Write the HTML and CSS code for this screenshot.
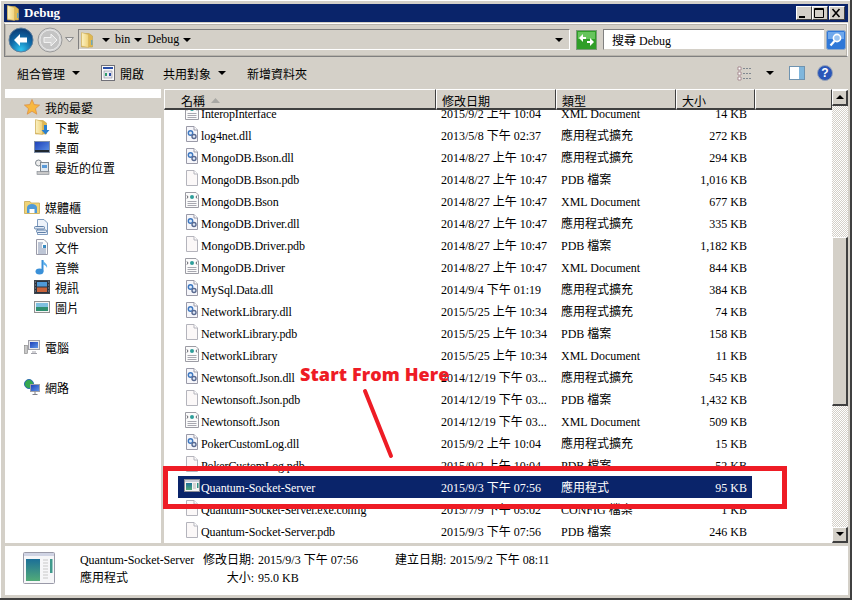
FILE: index.html
```html
<html>
<head>
<meta charset="utf-8" />
<title>Debug</title>
<link rel="stylesheet" href="styles.css">
</head>
<body>
<svg class="defs" width="0" height="0">
	<defs>
		<linearGradient id="folderFill" x1="0" y1="0" x2="1" y2="0">
			<stop offset="0" stop-color="#fbf2c4"/>
			<stop offset="1" stop-color="#f0d27a"/>
		</linearGradient>
		<linearGradient id="screenFill" x1="0" y1="0" x2="1" y2="1">
			<stop offset="0" stop-color="#1c3fb8"/>
			<stop offset="1" stop-color="#5f96e8"/>
		</linearGradient>
		<linearGradient id="appFill" x1="0" y1="0" x2="0" y2="1">
			<stop offset="0" stop-color="#1c6f98"/>
			<stop offset="1" stop-color="#52ab78"/>
		</linearGradient>
		<radialGradient id="backFill" cx="0.5" cy="0.9" r="0.85">
			<stop offset="0" stop-color="#2fc4f0"/>
			<stop offset="0.55" stop-color="#0f6aa8"/>
			<stop offset="1" stop-color="#0b3f78"/>
		</radialGradient>
		<symbol id="i-blank" viewBox="0 0 16 16">
			<path d="M2.5 .5H10L13.5 4V15.5H2.5Z" fill="#fbf8f8" stroke="#b4b4bc"/>
			<path d="M10 .5V4H13.5" fill="#fff" stroke="#b4b4bc"/>
		</symbol>
		<symbol id="i-dll" viewBox="0 0 16 16">
			<path d="M2.5 .5H10L13.5 4V15.5H2.5Z" fill="#f6f6fa" stroke="#9a9aa8"/>
			<path d="M10 .5V4H13.5" fill="#fff" stroke="#9a9aa8"/>
			<circle cx="6.5" cy="7" r="2.2" fill="#dfeaf8" stroke="#3f78c0" stroke-width="1.4"/>
			<circle cx="10" cy="10.5" r="2" fill="#dfeaf8" stroke="#5a6a90" stroke-width="1.4"/>
		</symbol>
		<symbol id="i-xml" viewBox="0 0 16 16">
			<path d="M1.5 .5H12L14.5 3V15.5H1.5Z" fill="#fbfbfb" stroke="#9c9ca4"/>
			<path d="M3 3.5L4 5L3 6.5M13 3.5L12 5L13 6.5" fill="none" stroke="#606068"/>
			<circle cx="8" cy="5" r="2" fill="#2e9e9a"/>
			<path d="M3.5 9.5H12.5M3.5 11.5H12.5M3.5 13.5H12.5" stroke="#a8a8b0"/>
		</symbol>
		<symbol id="i-app" viewBox="0 0 16 16">
			<rect x=".5" y="1.5" width="15" height="12" fill="#f4f4f4" stroke="#8c8c94"/>
			<rect x="1" y="2" width="14" height="2" fill="#c8ccd8"/>
			<rect x="2" y="5" width="6" height="7" fill="url(#appFill)"/>
			<path d="M9 6H12M9 8H12M9 10H12" stroke="#b0b0b0"/>
			<rect x="13" y="5" width="1.5" height="5" fill="#2f8f80"/>
		</symbol>
		<symbol id="i-folder" viewBox="0 0 12 16">
			<path d="M.5 1.500H8L11.500 4V15H.5Z" fill="#e0b850" stroke="#c4a24a" stroke-width=".6"/>
			<path d="M10 8H11.500V13H10Z" fill="#6fa8b8"/>
			<path d="M.5 .5L7.500 2.500V15.500L.5 14Z" fill="url(#folderFill)" stroke="#d0b060" stroke-width=".6"/>
		</symbol>
	</defs>
</svg>

<div class="window">
	<div class="titlebar">
		<svg class="title-icon" width="12" height="16"><use href="#i-folder"/></svg>
		<span class="title-text">Debug</span>
		<div class="win-btns">
			<span class="win-btn"><svg width="15" height="14"><rect x="3" y="10" width="6" height="2" fill="#000"/></svg></span>
			<span class="win-btn"><svg width="15" height="14"><path d="M2.5 2.5H11.5V11.5H2.5Z M2.5 3.5H11.5" fill="none" stroke="#000"/></svg></span>
			<span class="win-btn win-close"><svg width="15" height="14"><path d="M3.5 3L10.5 11M10.5 3L3.5 11" stroke="#000" stroke-width="1.6"/></svg></span>
		</div>
	</div>

	<div class="navbar">
		<div class="nav-pill">
			<svg width="26" height="26"><circle cx="13" cy="13" r="12" fill="url(#backFill)" stroke="#5d7e9c"/><path d="M6 13L12 7V10.5H19V15.5H12V19Z" fill="#fff"/></svg>
			<svg class="nav-fwd" width="26" height="26"><circle cx="13" cy="13" r="12" fill="#d6d6d6" stroke="#9a9a9a"/><circle cx="13" cy="13" r="10" fill="#c4c4c4" stroke="#e6e6e6"/><path d="M20 13L14 7V10.5H7V15.5H14V19Z" fill="#d4d4d4" stroke="#f2f2f2"/></svg>
			<svg class="nav-drop" width="9" height="6"><path d="M.5 .5H8.5L4.5 5Z" fill="#eee" stroke="#8c8c8c"/></svg>
		</div>
		<div class="address">
			<svg class="addr-icon" width="12" height="16"><use href="#i-folder"/></svg>
			<span class="caret addr-first"></span>
			<span class="crumb">bin</span>
			<span class="caret"></span>
			<span class="crumb">Debug</span>
			<span class="caret"></span>
			<span class="caret addr-end"></span>
		</div>
		<svg class="refresh" width="21" height="20">
			<rect x=".5" y=".5" width="20" height="19" fill="#2f9e28" stroke="#7a9a78"/>
			<rect x="2" y="2" width="17" height="7" fill="#66c45c"/>
			<path d="M3 8L7 4V7H10V9H7V12ZM18 12L14 16V13H11V11H14V8Z" fill="#fff"/>
		</svg>
		<div class="search">搜尋 Debug</div>
		<svg class="search-btn" width="20" height="20">
			<rect x=".5" y=".5" width="19" height="19" rx="2" fill="#2f78d8" stroke="#8fa8c8"/>
			<rect x="2" y="2" width="16" height="7" fill="#6fa8ec"/>
			<circle cx="11" cy="8" r="3.6" fill="#9cc4f0" stroke="#fff" stroke-width="1.6"/>
			<path d="M8.5 11L4.5 15.5" stroke="#fff" stroke-width="2.2"/>
		</svg>
	</div>

	<div class="toolbar">
		<span class="tool">組合管理</span>
		<span class="caret tool-caret"></span>
		<svg class="tool-open" width="16" height="16">
			<rect x="1.5" y=".5" width="13" height="15" fill="#fafafa" stroke="#707078"/>
			<rect x="3" y="2" width="10" height="2" fill="#2a4fa8"/>
			<rect x="4" y="6" width="8" height="7" fill="#e8e8f0" stroke="#8a8a9a" stroke-width=".6"/>
			<rect x="5" y="8" width="2" height="3" fill="#2f9e6a"/>
			<rect x="9" y="8" width="2" height="3" fill="#2a4fa8"/>
		</svg>
		<span class="tool tool-gap4">開啟</span>
		<span class="tool tool-share">共用對象</span>
		<span class="caret tool-caret"></span>
		<span class="tool tool-new">新增資料夾</span>
		<div class="tool-right">
			<svg width="16" height="16"><path d="M1 2H4V5H1ZM1 7H4V10H1ZM1 12H4V15H1Z" fill="#fff" stroke="#9a7a80" stroke-width=".8"/><path d="M6 3.5H15M6 8.5H15M6 13.5H15" stroke="#808890" stroke-dasharray="2 1"/></svg>
			<span class="caret"></span>
			<svg width="16" height="16"><rect x=".5" y="1.5" width="15" height="13" fill="#fff" stroke="#6f93b0"/><rect x="10" y="2" width="5" height="12" fill="#7fb6dc"/></svg>
			<svg width="16" height="16"><circle cx="8" cy="8" r="7.5" fill="#2a56b8" stroke="#98a4b8"/><text class="help-mark" x="8" y="12" text-anchor="middle">?</text></svg>
		</div>
	</div>

	<div class="main">
		<div class="sidebar">
			<div class="side-section">
				<div class="side-group">
					<svg width="16" height="16"><path d="M8 .5L10.2 5.6L15.6 6.1L11.5 9.7L12.8 15.2L8 12.3L3.2 15.2L4.5 9.7L.4 6.1L5.8 5.6Z" fill="#f8b840" stroke="#d88a40" stroke-width=".7"/></svg>
					<span>我的最愛</span>
				</div>
				<div class="side-item">
					<svg width="16" height="16"><use href="#i-folder" width="12" height="16" x="1"/><path d="M10 6H13V11H15.5L11.5 15.5L7.5 11H10Z" fill="#2a80d0"/></svg>
					<span>下載</span>
				</div>
				<div class="side-item">
					<svg width="16" height="16"><rect x=".5" y="2.5" width="15" height="11" fill="url(#screenFill)" stroke="#8090a8"/><rect x="1" y="11" width="14" height="2" fill="#202830"/></svg>
					<span>桌面</span>
				</div>
				<div class="side-item">
					<svg width="16" height="16"><circle cx="4.5" cy="4" r="3" fill="#eee" stroke="#808890"/><rect x="6.5" y="3.5" width="8" height="9" fill="#dfe8f0" stroke="#808890"/><rect x="8" y="6" width="5" height="3" fill="#5a9ad8"/><rect x="3" y="12.5" width="12" height="3" fill="#c8c8c8" stroke="#808890" stroke-width=".6"/></svg>
					<span>最近的位置</span>
				</div>
			</div>

			<div class="side-section">
				<div class="side-group">
					<svg width="16" height="16"><path d="M.5 2.5H6L7 4H15.5V14.5H.5Z" fill="#f0d478" stroke="#c8a850" stroke-width=".8"/><path d="M3 8.5A5 3.5 0 0 1 13 8.5V14H3Z" fill="#4f9ad8"/><rect x="5.5" y="10" width="5" height="4" fill="#fff"/></svg>
					<span>媒體櫃</span>
				</div>
				<div class="side-item">
					<svg width="16" height="16"><path d="M3.5 .5H10L13.5 4V15.5H3.5Z" fill="#eef3fa" stroke="#7f9cc0"/><rect x=".5" y="7.5" width="10" height="2.5" rx="1" fill="#dfe8f4" stroke="#6080a8"/><rect x="2.5" y="11" width="10" height="2.5" rx="1" fill="#dfe8f4" stroke="#6080a8"/></svg>
					<span class="latin">Subversion</span>
				</div>
				<div class="side-item">
					<svg width="16" height="16"><path d="M2.5 .5H10L13.5 4V15.5H2.5Z" fill="#fbfbfb" stroke="#9a9aa8"/><path d="M4 4H9M4 6H8M4 8H8M4 10H12M4 12H12M4 14H12" stroke="#8090b0"/><rect x="9" y="6" width="3" height="3" fill="#3a8ac0"/></svg>
					<span>文件</span>
				</div>
				<div class="side-item">
					<svg width="16" height="16"><path d="M8.5 1V12.5" stroke="#3a90d8" stroke-width="2"/><ellipse cx="5.5" cy="12.5" rx="4" ry="3" fill="#3a90d8"/><path d="M9 1C10 4 14 4.5 13 9C12.5 7 11 6 9 5.5Z" fill="#5fb0ec"/></svg>
					<span>音樂</span>
				</div>
				<div class="side-item">
					<svg width="16" height="16"><rect x=".5" y="1.5" width="15" height="13" fill="#2c3440" stroke="#404850"/><rect x="3" y="3" width="10" height="4.500" fill="#4f9ad8"/><rect x="3" y="8.500" width="10" height="4.500" fill="#c8643c"/><path d="M1.500 3H2M1.500 6H2M1.500 9H2M1.500 12H2M14 3H14.500M14 6H14.500M14 9H14.500M14 12H14.500" stroke="#fff"/></svg>
					<span>視訊</span>
				</div>
				<div class="side-item">
					<svg width="16" height="16"><rect x=".5" y="2.500" width="15" height="11" fill="#f4f4f4" stroke="#909090"/><rect x="2" y="4" width="12" height="4" fill="#7fc0e0"/><rect x="2" y="8" width="12" height="4" fill="#2f8f70"/></svg>
					<span>圖片</span>
				</div>
			</div>

			<div class="side-section">
				<div class="side-group">
					<svg width="16" height="16"><rect x=".5" y="6.500" width="3" height="8" fill="#c8c8c8" stroke="#808080" stroke-width=".6"/><rect x="4.500" y="1.500" width="11" height="9" fill="#e8e8ec" stroke="#a0a0a8"/><rect x="6" y="3" width="8" height="6" fill="url(#screenFill)"/><path d="M8 13H12M7 14.500H13" stroke="#a0a0a8"/></svg>
					<span>電腦</span>
				</div>
			</div>

			<div class="side-section">
				<div class="side-group">
					<svg width="16" height="16"><circle cx="5" cy="5" r="4.500" fill="#35a84f" stroke="#2a6ab0"/><rect x="6.500" y="5.500" width="9" height="7" fill="url(#screenFill)" stroke="#a0a0a8"/><path d="M11 12.500V15M8.500 15.500H13.500" stroke="#808088"/></svg>
					<span>網路</span>
				</div>
			</div>
		</div>

		<div class="content">
			<div class="header">
				<div class="col col-name">名稱<svg class="sort" width="9" height="5"><path d="M0 5L4.500 0L9 5Z" fill="#a8a8a4"/></svg></div>
				<div class="col col-date">修改日期</div>
				<div class="col col-type">類型</div>
				<div class="col col-size">大小</div>
				<div class="col col-rest"></div>
			</div>
			<div class="list">
				<div class="row row-first"><span class="name"><svg width="16" height="16"><use href="#i-xml"/></svg>InteropInterface</span><span>2015/9/2 上午 10:04</span><span>XML Document</span><span class="size">14 KB</span></div>
				<div class="row"><span class="name"><svg width="16" height="16"><use href="#i-dll"/></svg>log4net.dll</span><span>2013/5/8 下午 02:37</span><span>應用程式擴充</span><span class="size">272 KB</span></div>
				<div class="row"><span class="name"><svg width="16" height="16"><use href="#i-dll"/></svg>MongoDB.Bson.dll</span><span>2014/8/27 上午 10:47</span><span>應用程式擴充</span><span class="size">294 KB</span></div>
				<div class="row"><span class="name"><svg width="16" height="16"><use href="#i-blank"/></svg>MongoDB.Bson.pdb</span><span>2014/8/27 上午 10:47</span><span>PDB 檔案</span><span class="size">1,016 KB</span></div>
				<div class="row"><span class="name"><svg width="16" height="16"><use href="#i-xml"/></svg>MongoDB.Bson</span><span>2014/8/27 上午 10:47</span><span>XML Document</span><span class="size">677 KB</span></div>
				<div class="row"><span class="name"><svg width="16" height="16"><use href="#i-dll"/></svg>MongoDB.Driver.dll</span><span>2014/8/27 上午 10:47</span><span>應用程式擴充</span><span class="size">335 KB</span></div>
				<div class="row"><span class="name"><svg width="16" height="16"><use href="#i-blank"/></svg>MongoDB.Driver.pdb</span><span>2014/8/27 上午 10:47</span><span>PDB 檔案</span><span class="size">1,182 KB</span></div>
				<div class="row"><span class="name"><svg width="16" height="16"><use href="#i-xml"/></svg>MongoDB.Driver</span><span>2014/8/27 上午 10:47</span><span>XML Document</span><span class="size">844 KB</span></div>
				<div class="row"><span class="name"><svg width="16" height="16"><use href="#i-dll"/></svg>MySql.Data.dll</span><span>2014/9/4 下午 01:19</span><span>應用程式擴充</span><span class="size">384 KB</span></div>
				<div class="row"><span class="name"><svg width="16" height="16"><use href="#i-dll"/></svg>NetworkLibrary.dll</span><span>2015/5/25 上午 10:34</span><span>應用程式擴充</span><span class="size">74 KB</span></div>
				<div class="row"><span class="name"><svg width="16" height="16"><use href="#i-blank"/></svg>NetworkLibrary.pdb</span><span>2015/5/25 上午 10:34</span><span>PDB 檔案</span><span class="size">158 KB</span></div>
				<div class="row"><span class="name"><svg width="16" height="16"><use href="#i-xml"/></svg>NetworkLibrary</span><span>2015/5/25 上午 10:34</span><span>XML Document</span><span class="size">11 KB</span></div>
				<div class="row"><span class="name"><svg width="16" height="16"><use href="#i-dll"/></svg>Newtonsoft.Json.dll</span><span>2014/12/19 下午 03...</span><span>應用程式擴充</span><span class="size">545 KB</span></div>
				<div class="row"><span class="name"><svg width="16" height="16"><use href="#i-blank"/></svg>Newtonsoft.Json.pdb</span><span>2014/12/19 下午 03...</span><span>PDB 檔案</span><span class="size">1,432 KB</span></div>
				<div class="row"><span class="name"><svg width="16" height="16"><use href="#i-xml"/></svg>Newtonsoft.Json</span><span>2014/12/19 下午 03...</span><span>XML Document</span><span class="size">509 KB</span></div>
				<div class="row"><span class="name"><svg width="16" height="16"><use href="#i-dll"/></svg>PokerCustomLog.dll</span><span>2015/9/2 上午 10:04</span><span>應用程式擴充</span><span class="size">15 KB</span></div>
				<div class="row"><span class="name"><svg width="16" height="16"><use href="#i-blank"/></svg>PokerCustomLog.pdb</span><span>2015/9/2 上午 10:04</span><span>PDB 檔案</span><span class="size">52 KB</span></div>
				<div class="row row-selected"><span class="name"><svg width="16" height="16"><use href="#i-app"/></svg>Quantum-Socket-Server</span><span>2015/9/3 下午 07:56</span><span>應用程式</span><span class="size">95 KB</span></div>
				<div class="row"><span class="name"><svg width="16" height="16"><use href="#i-blank"/></svg>Quantum-Socket-Server.exe.config</span><span>2015/7/9 下午 05:02</span><span>CONFIG 檔案</span><span class="size">1 KB</span></div>
				<div class="row"><span class="name"><svg width="16" height="16"><use href="#i-blank"/></svg>Quantum-Socket-Server.pdb</span><span>2015/9/3 下午 07:56</span><span>PDB 檔案</span><span class="size">246 KB</span></div>
			</div>
			<div class="scrollbar">
				<div class="sb-btn"><span class="sb-up"></span></div>
				<div class="sb-track sb-before"></div>
				<div class="sb-thumb"></div>
				<div class="sb-track sb-after"></div>
				<div class="sb-btn"><span class="sb-down"></span></div>
			</div>
		</div>
	</div>

	<div class="details">
		<svg class="details-icon" width="32" height="32" viewBox="0 0 32 32">
			<rect x=".5" y=".5" width="31" height="31" rx="1" fill="#f6f6f8" stroke="#9a9aa8"/>
			<rect x="1" y="1" width="30" height="3" fill="#d0d4e4"/>
			<rect x="3" y="7" width="14" height="22" fill="url(#appFill)"/>
			<path d="M20 8H25M20 11H25M20 14H25M20 17H25M20 20H25M20 23H25M20 26H25" stroke="#c8c8c8"/>
			<rect x="27" y="7" width="2.500" height="14" fill="#3f9a8c"/>
		</svg>
		<div class="details-grid">
			<span class="latin">Quantum-Socket-Server</span>
			<span class="label">修改日期:</span>
			<span>2015/9/3 下午 07:56</span>
			<span class="label">建立日期:</span>
			<span>2015/9/2 下午 08:11</span>
			<span>應用程式</span>
			<span class="label label-right">大小:</span>
			<span>95.0 KB</span>
			<span></span>
			<span></span>
		</div>
	</div>

	<div class="note-box"></div>
	<span class="note-text">Start From Here</span>
	<svg class="note-line" width="40" height="80"><path d="M6 5L32 70" stroke="#ee1c25" stroke-width="4" stroke-linecap="round"/></svg>
</div>
</body>
</html>
```

FILE: styles.css
```css
* {
	box-sizing: border-box;
}

body {
	margin: 0;
	background-color: #fff;
	color: #000;
	font-family: "Liberation Serif", "Noto Sans CJK TC", serif;
	font-size: 12px;
	line-height: 16px;
}

svg {
	display: block;
	flex: none;
}

.defs {
	position: absolute;
}

.latin {
	letter-spacing: -0.12px;
}

.window {
	position: relative;
	display: flex;
	flex-direction: column;
	width: 852px;
	height: 600px;
	padding: 4px 2px 3px 4px;
	background-color: #d4d0c8;
	border-right: 2px solid #404040;
	border-bottom: 2px solid #404040;
	box-shadow: inset 1px 1px 0 #fff;
}

/* title */
.titlebar {
	display: flex;
	align-items: center;
	height: 18px;
	padding-left: 3px;
	background-color: #0a246a;
	color: #fff;
}

.title-text {
	margin-left: 5px;
	font-weight: bold;
	font-size: 13px;
}

.win-btns {
	display: flex;
	margin-left: auto;
	margin-right: 3px;
}

.win-btn {
	width: 16px;
	height: 14px;
	background-color: #d4d0c8;
	border-right: 1px solid #404040;
	border-bottom: 1px solid #404040;
	border-left: 1px solid #fff;
	border-top: 1px solid #fff;
}

.win-close {
	margin-left: 1px;
}

.win-btn svg {
	margin: -1px 0 0 -1px;
}

/* address row */
.navbar {
	display: flex;
	align-items: center;
	height: 35px;
	margin-top: 1px;
	border: 1px solid #fff;
	border-left-color: #808080;
	border-top-color: #fff;
	border-bottom-color: #808080;
	outline: 1px solid #b8b4ac;
	outline-offset: -2px;
}

.nav-pill {
	display: flex;
	align-items: center;
	width: 73px;
	padding-left: 3px;
}

.nav-fwd {
	margin-left: 3px;
}

.nav-drop {
	margin-left: 2px;
}

.address {
	display: flex;
	align-items: center;
	width: 492px;
	height: 21px;
	border-top: 1px solid #808080;
	border-left: 1px solid #808080;
	border-bottom: 1px solid #fff;
	border-right: 1px solid #fff;
}

.addr-icon {
	margin-left: 2px;
}

.addr-first {
	margin-left: 9px;
}

.crumb {
	margin: 0 4px 2px 5px;
}

.addr-end {
	margin-left: auto;
	margin-right: 6px;
}

.caret {
	flex: none;
	width: 0;
	height: 0;
	border-left: 4px solid transparent;
	border-right: 4px solid transparent;
	border-top: 4px solid #000;
}

.refresh {
	margin-left: 6px;
}

.search {
	display: flex;
	align-items: center;
	width: 221px;
	height: 21px;
	margin-left: 6px;
	padding: 2px 0 0 8px;
	background-color: #fff;
	border-top: 1px solid #808080;
	border-left: 1px solid #808080;
	border-bottom: 1px solid #d4d0c8;
}

.search-btn {
	margin-left: 2px;
}

/* commands */
.toolbar {
	display: flex;
	align-items: center;
	height: 32px;
	padding: 0 15px 0 13px;
}

.tool {
	padding-top: 4px;
}

.tool-caret {
	margin-left: 7px;
}

.tool-open {
	margin-left: 20px;
}

.tool-gap4 {
	margin-left: 4px;
}

.tool-share {
	margin-left: 19px;
}

.tool-new {
	margin-left: 21px;
}

.tool-right {
	display: flex;
	align-items: center;
	margin-left: auto;
}

.tool-right .caret {
	margin: 0 15px 0 13px;
}

.tool-right svg:last-child {
	margin-left: 12px;
}

.help-mark {
	fill: #fff;
	font-family: "Liberation Sans", sans-serif;
	font-weight: bold;
	font-size: 12px;
}

/* panes */
.main {
	display: flex;
	height: 454px;
}

.sidebar {
	width: 156px;
	margin-left: 1px;
	padding-top: 9px;
	background-color: #fff;
}

.side-section {
	margin-bottom: 20px;
}

.side-group,
.side-item {
	display: flex;
	align-items: center;
	gap: 5px;
	height: 20px;
}

.side-group span,
.side-item span {
	padding-top: 2px;
}

.side-group svg,
.side-item svg {
	margin-bottom: 2px;
}

.side-group {
	padding-left: 19px;
}

.side-item {
	padding-left: 29px;
}

.side-section:first-child .side-group {
	background-color: #d4d0c8;
}

.content {
	display: grid;
	grid-template-columns: 668px 16px;
	grid-template-rows: 21px 433px;
	width: 684px;
	margin-left: 3px;
	background-color: #fff;
}

.header {
	display: flex;
	grid-column: 1;
	grid-row: 1;
	background-color: #d4d0c8;
}

.col {
	display: flex;
	align-items: flex-start;
	height: 21px;
	padding: 4px 0 0 5px;
	border-top: 1px solid #fff;
	border-left: 1px solid #fff;
	border-right: 1px solid #404040;
	border-bottom: 2px solid #404040;
}

.col-name {
	width: 272px;
	padding-left: 16px;
}

.col-date,
.col-type {
	width: 120px;
}

.col-size {
	width: 79px;
}

.col-rest {
	width: 77px;
}

.sort {
	margin: 4px 0 0 6px;
}

.list {
	grid-column: 1;
	grid-row: 2;
	overflow: hidden;
	padding-left: 14px;
}

.row {
	display: grid;
	grid-template-columns: 263px 120px 120px 71px;
	align-items: center;
	width: 574px;
	height: 22px;
	padding-top: 2px;
}

.row-first {
	margin-top: -8px;
}

.row-selected {
	background-color: #0a246a;
	color: #fff;
}

.name {
	display: flex;
	align-items: center;
	gap: 1px;
	padding-left: 6px;
	letter-spacing: -0.12px;
}

.name svg {
	margin-bottom: 4px;
}

.size {
	padding-right: 5px;
	text-align: right;
}

.scrollbar {
	display: flex;
	flex-direction: column;
	grid-column: 2;
	grid-row: 1 / 3;
	padding-top: 1px;
}

.sb-btn {
	display: flex;
	align-items: center;
	justify-content: center;
	flex: none;
	height: 16px;
	background-color: #d4d0c8;
	border-top: 1px solid #fff;
	border-left: 1px solid #fff;
	border-right: 2px solid #404040;
	border-bottom: 2px solid #404040;
}

.sb-up,
.sb-down {
	width: 0;
	height: 0;
	border-left: 4px solid transparent;
	border-right: 4px solid transparent;
}

.sb-up {
	border-bottom: 4px solid #000;
}

.sb-down {
	border-top: 4px solid #000;
}

.sb-track {
	background: repeating-conic-gradient(#d4d0c8 0 25%, #fff 0 50%) 0 0 / 2px 2px;
}

.sb-before {
	height: 131px;
}

.sb-after {
	flex: 1;
}

.sb-thumb {
	height: 169px;
	background-color: #d4d0c8;
	border-top: 1px solid #fff;
	border-left: 1px solid #fff;
	border-right: 2px solid #404040;
	border-bottom: 2px solid #404040;
}

/* details */
.details {
	display: flex;
	height: 50px;
	margin: 3px 0 0 1px;
	padding: 6px 0 0 18px;
	background-color: #fff;
}

.details-grid {
	display: grid;
	grid-template-columns: 123px 55px 137px 55px auto;
	grid-auto-rows: 18px;
	align-items: center;
	margin-left: 25px;
	margin-top: -1px;
}

.label-right {
	padding-right: 4px;
	text-align: right;
}

/* red notes drawn over the shot */
.note-box {
	position: absolute;
	left: 163px;
	top: 466px;
	width: 624px;
	height: 43px;
	border: 5px solid #ee1c25;
}

.note-text {
	position: absolute;
	left: 300px;
	top: 362px;
	color: #ee1c25;
	font-family: "Open Sans", sans-serif;
	font-weight: 800;
	font-size: 18px;
	line-height: 24px;
	letter-spacing: 0.1px;
	white-space: nowrap;
}

.note-line {
	position: absolute;
	left: 359px;
	top: 386px;
}
```
